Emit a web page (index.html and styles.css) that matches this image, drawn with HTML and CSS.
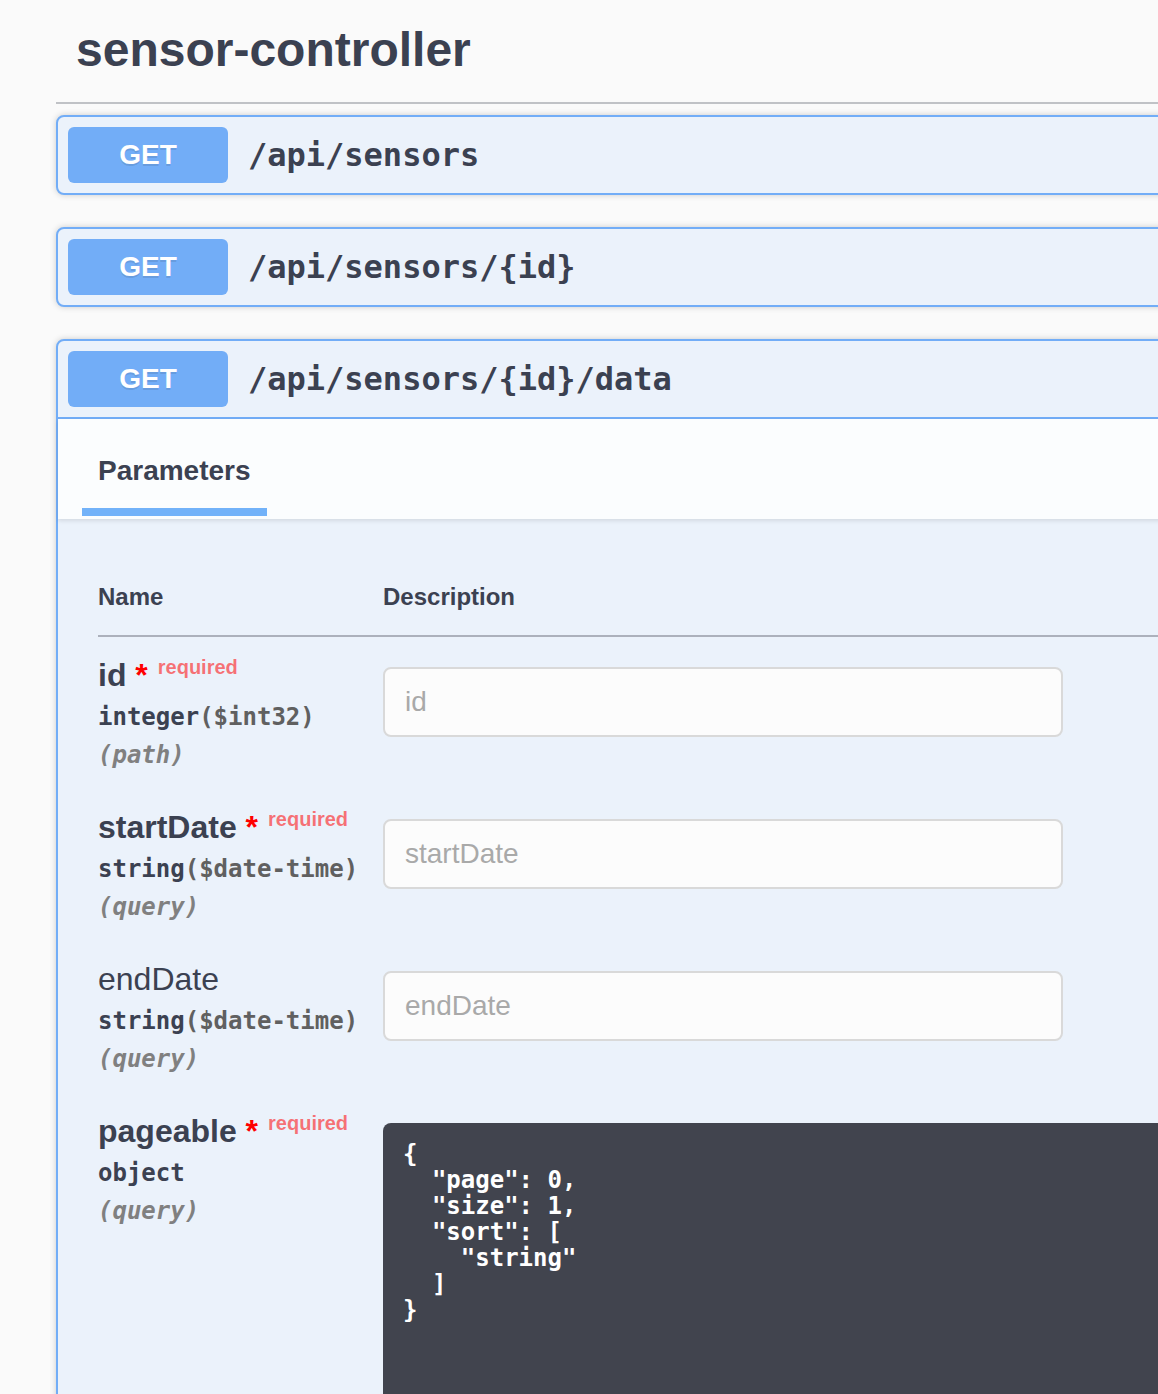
FILE: index.html
```html
<!DOCTYPE html>
<html lang="en">
<head>
<meta charset="utf-8">
<title>sensor-controller</title>
<link rel="stylesheet" href="styles.css">
</head>
<body>
<div class="tag-section">
  <h3 class="tag-title">sensor-controller</h3>

  <div class="opblock">
    <div class="summary">
      <span class="method">GET</span>
      <span class="path">/api/sensors</span>
    </div>
  </div>

  <div class="opblock">
    <div class="summary">
      <span class="method">GET</span>
      <span class="path">/api/sensors/{id}</span>
    </div>
  </div>

  <div class="opblock is-open">
    <div class="summary summary-open">
      <span class="method">GET</span>
      <span class="path">/api/sensors/{id}/data</span>
    </div>
    <div class="section-header">
      <div class="tab-item">Parameters</div>
    </div>
    <div class="table-container">
      <table class="params">
        <thead>
          <tr>
            <td class="col-name">Name</td>
            <td class="col-desc">Description</td>
          </tr>
        </thead>
        <tbody>
          <tr>
            <td class="col-name">
              <div class="param-name required">id<span class="star">&nbsp;*</span></div>
              <div class="param-type">integer<span class="fmt">($int32)</span></div>
              <div class="param-in">(path)</div>
            </td>
            <td class="col-desc"><input class="text-input" type="text" placeholder="id"></td>
          </tr>
          <tr>
            <td class="col-name">
              <div class="param-name required">startDate<span class="star">&nbsp;*</span></div>
              <div class="param-type">string<span class="fmt">($date-time)</span></div>
              <div class="param-in">(query)</div>
            </td>
            <td class="col-desc"><input class="text-input" type="text" placeholder="startDate"></td>
          </tr>
          <tr>
            <td class="col-name">
              <div class="param-name">endDate</div>
              <div class="param-type">string<span class="fmt">($date-time)</span></div>
              <div class="param-in">(query)</div>
            </td>
            <td class="col-desc"><input class="text-input" type="text" placeholder="endDate"></td>
          </tr>
          <tr>
            <td class="col-name">
              <div class="param-name required">pageable<span class="star">&nbsp;*</span></div>
              <div class="param-type">object</div>
              <div class="param-in">(query)</div>
            </td>
            <td class="col-desc"><textarea class="body-param" spellcheck="false">{
  "page": 0,
  "size": 1,
  "sort": [
    "string"
  ]
}</textarea></td>
          </tr>
        </tbody>
      </table>
    </div>
  </div>
</div>
</body>
</html>
```

FILE: styles.css
```css
html, body {
  margin: 0;
  padding: 0;
  background: #fafafa;
  overflow: hidden;
}

body {
  font-family: "Liberation Sans", Arial, Helvetica, sans-serif;
  color: #3b4151;
}

.tag-section {
  margin-left: 56px;
  width: 1510px;
}

.tag-title {
  margin: 0 0 11px 0;
  padding: 22px 20px 24px 20px;
  font-size: 48px;
  line-height: 56px;
  font-weight: bold;
  color: #3b4151;
  border-bottom: 2px solid rgba(59, 65, 81, 0.3);
}

.opblock {
  border: 2px solid #72adf7;
  border-radius: 8px;
  background: #ebf2fb;
  box-shadow: 0 0 6px rgba(0, 0, 0, 0.19);
  margin-bottom: 32px;
}

.summary {
  display: flex;
  align-items: center;
  padding: 10px;
}

.summary-open {
  border-bottom: 2px solid #72adf7;
}

.method {
  display: flex;
  align-items: center;
  justify-content: center;
  min-width: 160px;
  height: 56px;
  border-radius: 6px;
  background: #72adf7;
  color: #fff;
  font-size: 28px;
  font-weight: bold;
  text-shadow: 0 2px 0 rgba(0, 0, 0, 0.1);
}

.path {
  padding: 0 20px;
  font-family: "DejaVu Sans Mono", monospace;
  font-weight: bold;
  font-size: 32px;
  color: #3b4151;
}

.section-header {
  display: flex;
  align-items: center;
  min-height: 96px;
  padding: 4px 40px 0 40px;
  background: rgba(255, 255, 255, 0.8);
  box-shadow: 0 2px 4px rgba(0, 0, 0, 0.1);
}

.tab-item {
  position: relative;
  font-size: 28px;
  font-weight: bold;
  color: #3b4151;
}

.tab-item::after {
  content: "";
  position: absolute;
  left: -16px;
  right: -16px;
  bottom: -29px;
  height: 8px;
  background: #72b2f9;
}

.table-container {
  padding: 40px;
}

.params {
  width: 100%;
  border-collapse: collapse;
}

.params td {
  vertical-align: top;
  padding: 20px 20px 20px 0;
}

.params .col-name {
  width: 265px;
}

.params thead td {
  padding: 24px 0;
  font-size: 24px;
  font-weight: bold;
  color: #3b4151;
  border-bottom: 2px solid rgba(59, 65, 81, 0.2);
}

.param-name {
  font-size: 32px;
  line-height: 36px;
  color: #3b4151;
}

.param-name.required {
  font-weight: bold;
}

.param-name .star {
  color: red;
}

.param-name.required::after {
  content: "required";
  position: relative;
  top: -12px;
  padding: 0 10px;
  font-size: 20px;
  line-height: 1;
  font-weight: bold;
  color: rgba(255, 0, 0, 0.55);
}

.param-type {
  padding: 10px 0;
  font-family: "DejaVu Sans Mono", monospace;
  font-weight: bold;
  font-size: 24px;
  line-height: 28px;
  color: #3b4151;
}

.param-type .fmt {
  color: #606060;
}

.param-in {
  font-family: "DejaVu Sans Mono", monospace;
  font-weight: bold;
  font-style: italic;
  font-size: 24px;
  line-height: 28px;
  color: #808080;
}

.text-input {
  display: block;
  box-sizing: border-box;
  width: 680px;
  margin: 10px 0;
  padding: 16px 20px;
  border: 2px solid #d9d9d9;
  border-radius: 8px;
  background: #fcfcfc;
  font-family: "Liberation Sans", Arial, sans-serif;
  font-size: 28px;
  line-height: 34px;
  color: #3b4151;
  outline: none;
}

.text-input::placeholder {
  color: #a9a9a9;
}

.body-param {
  display: block;
  box-sizing: border-box;
  width: 900px;
  height: 560px;
  margin: 10px 0;
  padding: 18px 20px;
  border: none;
  border-radius: 8px;
  background: #41444e;
  color: #fff;
  font-family: "DejaVu Sans Mono", monospace;
  font-weight: bold;
  font-size: 24px;
  line-height: 26px;
  resize: none;
  outline: none;
  overflow: hidden;
}
```
